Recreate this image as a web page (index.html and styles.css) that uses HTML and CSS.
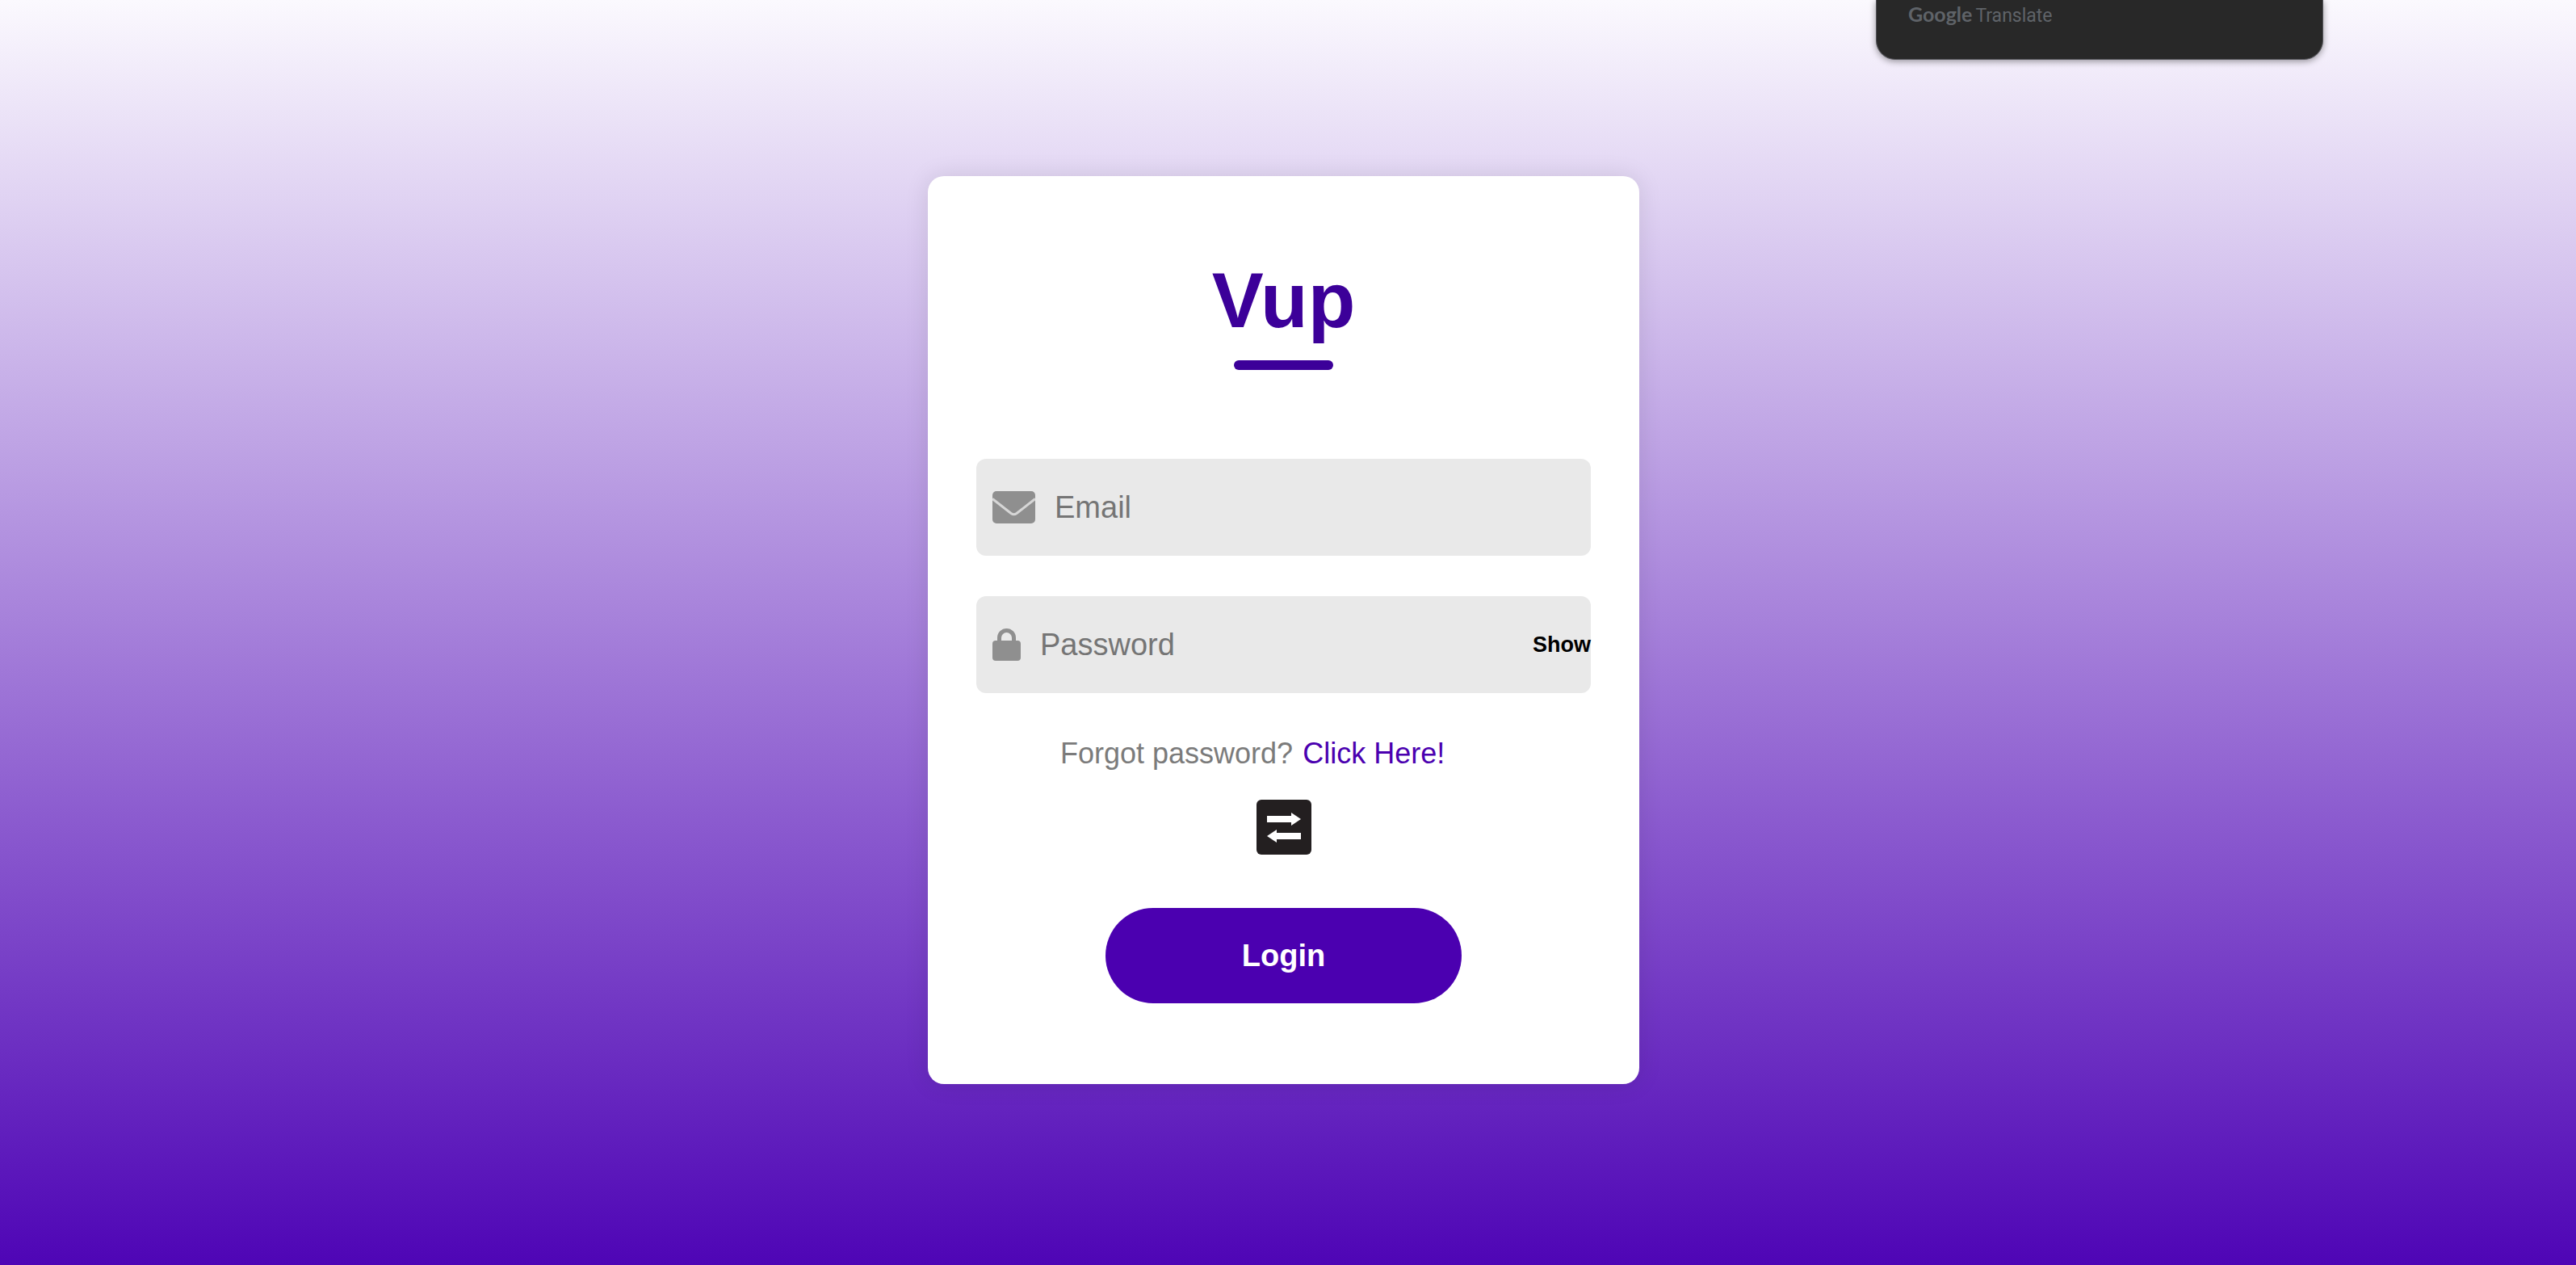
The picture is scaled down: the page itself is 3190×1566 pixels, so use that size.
FILE: index.html
```html
<!DOCTYPE html>
<html lang="en">
<head>
<meta charset="utf-8">
<title>Vup</title>
<link rel="stylesheet" href="styles.css">
</head>
<body>
<main class="page">
  <form class="card">
    <h1 class="title">Vup</h1>
    <div class="title-bar"></div>
    <div class="fields">
      <div class="field">
        <svg class="field-icon" width="53" height="40" viewBox="0 0 53 40" aria-hidden="true">
          <rect fill="#8f8f8f" width="53" height="40" rx="5"/>
          <path fill="none" stroke="#d6d6d6" stroke-width="3" d="M0 9.500L23 27.500Q26.500 30 30 27.500L53 9.500"/>
        </svg>
        <input class="field-input" type="email" placeholder="Email" aria-label="Email">
      </div>
      <div class="field">
        <svg class="field-icon" width="35" height="40" viewBox="0 0 35 40" aria-hidden="true">
          <path fill="none" stroke="#8f8f8f" stroke-width="5" d="M8.500 17V11.500A9 9 0 0 1 26.500 11.500V17"/>
          <rect fill="#8f8f8f" y="15" width="35" height="25" rx="4"/>
        </svg>
        <input class="field-input" type="password" placeholder="Password" aria-label="Password">
        <button class="show" type="button">Show</button>
      </div>
    </div>
    <p class="forgot">Forgot password? <a class="forgot-link" href="#">Click Here!</a></p>
    <button class="swap" type="button" aria-label="Switch form">
      <svg class="swap-icon" width="68" height="68" viewBox="0 0 68 68" aria-hidden="true">
        <rect width="68" height="68" rx="6" fill="#231f20"/>
        <path fill="#fff" d="M13 20H43V16L55 24L43 32V28H13ZM55 41H25V37L13 45L25 53V49H55Z"/>
      </svg>
    </button>
    <button class="login" type="submit">Login</button>
  </form>
</main>
<aside class="translate"><span class="brand">Google</span><span>Translate</span></aside>
</body>
</html>
```
FILE: styles.css
```css
* { box-sizing: border-box; }
body {
  margin: 0;
  min-height: 100vh;
  font-family: "Liberation Sans", Arial, sans-serif;
  background: linear-gradient(to bottom, #fbf9fe, #4b00b4 102%);
  background-attachment: fixed;
}
button { border: 0; padding: 0; font-family: inherit; cursor: pointer; }
.page {
  min-height: 100vh;
  display: flex;
  align-items: center;
  justify-content: center;
  padding: 60px 11px 66px 0;
}
.card {
  width: 881px;
  max-width: 100%;
  padding: 100px 60px;
  display: flex;
  flex-direction: column;
  align-items: center;
  background: #fff;
  border-radius: 20px;
  box-shadow: 0 0 30px rgba(0, 0, 0, 0.1);
}
.title { margin: 0; font-size: 96px; line-height: 108px; color: #3c0099; }
.title-bar { width: 123px; height: 12px; margin: 20px 0 110px; border-radius: 6px; background: #3c0099; }
.fields { width: 100%; display: grid; gap: 50px; }
.field {
  height: 120px;
  display: flex;
  align-items: center;
  padding-left: 20px;
  background: #e9e9e9;
  border-radius: 12px;
}
.field-icon { flex: none; }
.field-input {
  flex: 1;
  min-width: 0;
  margin-left: 20px;
  padding: 0 4px;
  border: 0;
  outline: 0;
  background: none;
  font-family: inherit;
  font-size: 38px;
}
.field-input::placeholder { color: #757575; }
.show { flex: none; background: none; color: #000; font-size: 27px; font-weight: bold; }
.forgot {
  width: 100%;
  margin: 54px 0 0;
  padding-left: 104px;
  font-size: 36px;
  line-height: 42px;
  color: #7b7b7b;
}
.forgot-link { color: #4b00b0; text-decoration: none; margin-left: 2px; }
.swap { display: flex; margin: 36px 0 66px; background: none; }
.login {
  width: 441px;
  height: 118px;
  border-radius: 59px;
  background: #4b00b0;
  color: #fff;
  font-size: 38px;
  font-weight: bold;
}
.translate {
  position: absolute;
  top: 0;
  right: 313px;
  width: 554px;
  height: 74px;
  padding: 2px 39px;
  display: flex;
  align-items: baseline;
  gap: 4px;
  background: #282828;
  border: 1px solid #55555a;
  border-top: 0;
  border-radius: 0 0 24px 24px;
  box-shadow: 0 2px 8px rgba(0, 0, 0, 0.4);
  color: #5f6368;
  font-family: Roboto, sans-serif;
  font-size: 23px;
  line-height: 30px;
}
.brand { font-family: Lato, sans-serif; font-size: 25px; font-weight: bold; }
```
